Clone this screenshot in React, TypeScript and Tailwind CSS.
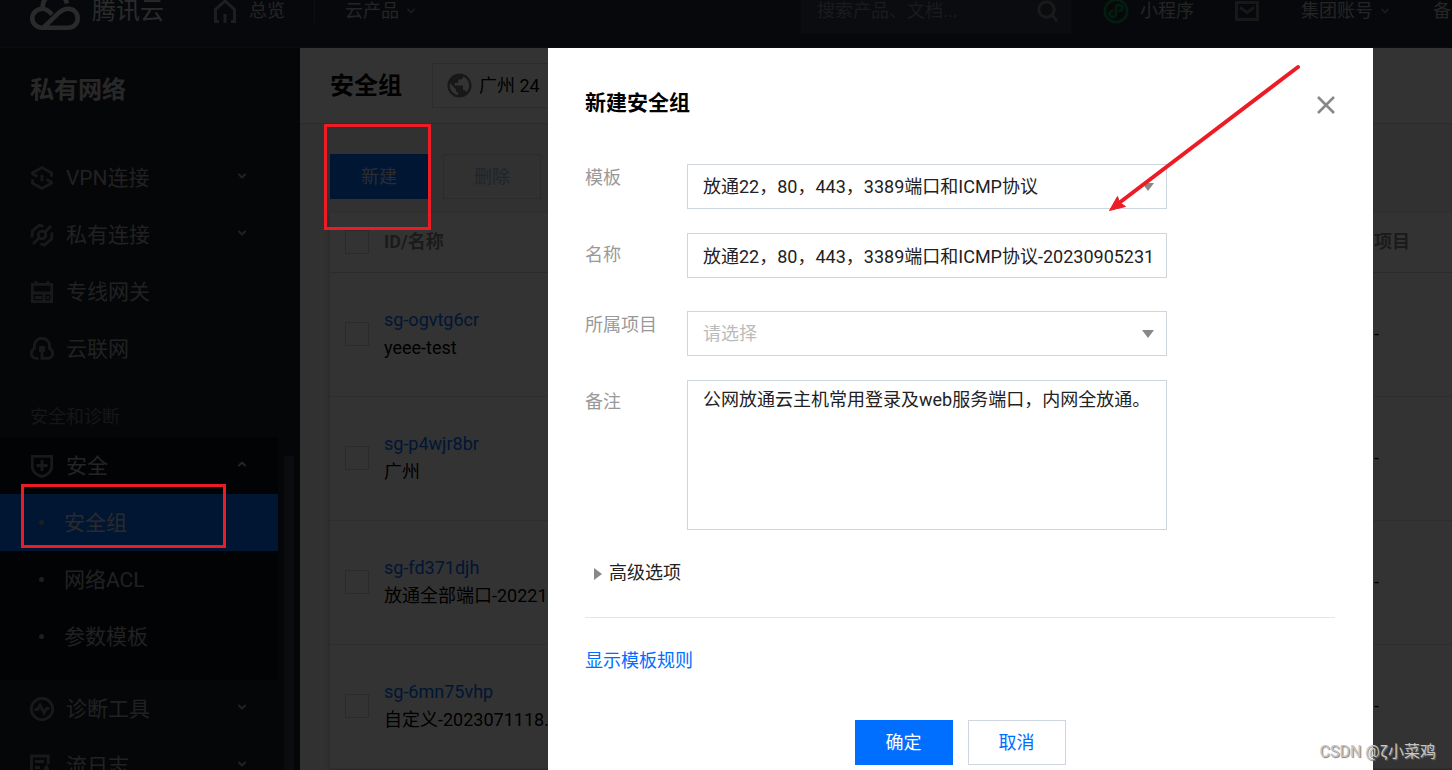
import React, { useState } from 'react';
import { ChevronDown, ChevronUp } from 'lucide-react';
import { MdPublic } from 'react-icons/md';

interface NavItem {
    label: string;
    icon: React.ReactNode;
    expandable?: boolean;
}

interface SecurityGroup {
    id: string;
    name: string;
    project: string;
}

const TEMPLATE = '放通22，80，443，3389端口和ICMP协议';

const groups: SecurityGroup[] = [
    { id: 'sg-ogvtg6cr', name: 'yeee-test', project: '-' },
    { id: 'sg-p4wjr8br', name: '广州', project: '-' },
    { id: 'sg-fd371djh', name: '放通全部端口-20221...', project: '-' },
    { id: 'sg-6mn75vhp', name: '自定义-2023071118...', project: '-' },
];

const Icon = ({ children }: { children: React.ReactNode }) => (
    <svg viewBox="0 0 24 24" fill="none" stroke="currentColor" strokeWidth="2.8" className="size-6 shrink-0 text-[#787d84]">
        {children}
    </svg>
);

const networkItems: NavItem[] = [
    {
        label: 'VPN连接',
        expandable: true,
        icon: (
            <Icon>
                <path d="M7.5 10.5 2.500 8V6.800L12 1.600l9.500 5.200v4M16.500 13.500l5 2.500v1.200L12 22.400l-9.500-5.200v-4M12 9v6" />
            </Icon>
        ),
    },
    {
        label: '私有连接',
        expandable: true,
        icon: (
            <Icon>
                <circle cx="12" cy="12" r="3.8" />
                <path d="M14.800 9.200 21 3M9.200 14.800 3 21M2 14.500 2.500 8l7-6 4 1.500M22 9.500l-.5 6.500-7 6-4-1" />
            </Icon>
        ),
    },
    {
        label: '专线网关',
        icon: (
            <Icon>
                <path d="M2.300 4.300h19.400v17.400H2.300zM2.300 13h19.400M6 1v3M18 1v3M14 13v8M5 17.500h7M16.500 17.500h2.500" />
            </Icon>
        ),
    },
    {
        label: '云联网',
        icon: (
            <Icon>
                <path d="M8.500 21.300C4 22 1.300 19.500 1.300 16.500c0-2.500 1.500-4.300 3.200-5C3.500 5.500 7 1.300 12 1.300s8.500 4.200 7.500 10.200c1.700.7 3.200 2.500 3.200 5 0 3-2.700 4.800-5.700 4.800h-5V15" />
                <path d="M9.500 9.500h5v5h-5z" fill="currentColor" strokeWidth="1" />
            </Icon>
        ),
    },
];

const toolItems: NavItem[] = [
    {
        label: '诊断工具',
        expandable: true,
        icon: (
            <Icon>
                <circle cx="12" cy="12" r="10.700" />
                <path d="M4.500 12.500h3L10 8l4 8 2.500-4.500h3" />
            </Icon>
        ),
    },
    {
        label: '流日志',
        expandable: true,
        icon: (
            <Icon>
                <path d="M18.200 10V2H1.500v20.500H11M5 7.500h9M5 13.500h5M13 20l3.500-7 3 7 3-4" />
            </Icon>
        ),
    },
];

const securityItems = ['安全组', '网络ACL', '参数模板'];

export default function App() {
    const [active, setActive] = useState('安全组');

    return (
        <div className="relative flex h-screen flex-col overflow-hidden bg-[#f2f2f2] text-lg leading-7 text-black [font-family:Roboto,'Noto_Sans_CJK_SC',sans-serif]">
            <TopBar />
            <div className="flex min-h-0 flex-1">
                <aside className="flex w-[300px] shrink-0 overflow-hidden bg-[#191e28]">
                    <nav className="w-[278px] shrink-0 text-[21px]">
                        <h2 className="flex h-[101px] items-start pt-7 pl-[30px] text-2xl leading-7 font-bold text-[#c8c8c8]">私有网络</h2>
                        {networkItems.map((item) => (
                            <NavRow key={item.label} item={item} />
                        ))}
                        <p className="flex h-[60px] items-center pt-5 pl-[30px] text-lg text-[#6a6f76]">安全和诊断</p>
                        <div className="bg-[#0c0f14] pb-[15px]">
                            <a href="#security" className="flex h-[57px] items-center px-[30px] text-[#b4b4b4]">
                                <Icon>
                                    <path d="M2.300 2.300h19.400v10.200c0 5-4.500 8.700-9.700 10.200-5.200-1.500-9.700-5.200-9.700-10.200zM12 6v11M6.500 11.500h11" />
                                </Icon>
                                <span className="ml-3 flex-1">安全</span>
                                <ChevronUp size={12} strokeWidth={4} className="mb-1" />
                            </a>
                            {securityItems.map((label) => (
                                <a
                                    key={label}
                                    href="#security"
                                    onClick={() => setActive(label)}
                                    className={
                                        active === label
                                            ? 'flex h-[57px] items-center bg-[#006eff] pl-[39px] text-[#d2d2d2]'
                                            : 'flex h-[57px] items-center pl-[39px] text-[#a5a5a5]'
                                    }
                                >
                                    <span className="size-[5px] rounded-full bg-[#969696]" />
                                    <span className="ml-5">{label}</span>
                                </a>
                            ))}
                        </div>
                        {toolItems.map((item) => (
                            <NavRow key={item.label} item={item} />
                        ))}
                    </nav>
                    <div className="mt-[408px] ml-1.5 w-2.5 bg-[#323c50]" />
                </aside>
                <SecurityGroupPage />
            </div>

            <div className="absolute inset-0 flex bg-black/80 pt-12 pr-[79px] pl-[548px]">
                <CreateDialog />
            </div>

            <Annotations />
            <p className="absolute right-4 bottom-1 text-base leading-7 text-[#c4c4c4] [text-shadow:1px_1px_1px_#777]">CSDN @ζ小菜鸡</p>
        </div>
    );
}

const NavRow = ({ item }: { item: NavItem }) => (
    <a href="#nav" className="flex h-[57px] items-center px-[30px] text-[#a5a5a5]">
        {item.icon}
        <span className="ml-3 flex-1">{item.label}</span>
        {item.expandable && <ChevronDown size={12} strokeWidth={4} className="mb-1" />}
    </a>
);

const TopBar = () => (
    <header className="h-12 shrink-0 overflow-hidden border-b border-[#353a48] bg-[#262c3a] text-[#b4b4b4]">
        <div className="-mt-[27px] flex h-[76px] items-center">
            <a href="#home" className="flex shrink-0 items-center pl-[30px] text-[#d2d2d2]">
                <svg viewBox="0 0 50 38" fill="none" stroke="currentColor" strokeWidth="4.500" className="h-[38px] w-[50px]">
                    <path d="M12.500 15C13 7 18.500 2.200 25 2.200c6 0 10.500 3.300 12 9.300" />
                    <path d="M22 22.500C19 19 16 16.700 12.500 16.700 7 16.700 2.300 21 2.300 26.200s4.200 9.500 9.700 9.500h26c5.500 0 9.700-4 9.700-9.500s-4.200-9.500-9.700-9.500c-4 0-6.500 1.800-9.500 4.500L13.500 35.500" />
                </svg>
                <span className="ml-3 text-2xl">腾讯云</span>
            </a>
            <a href="#overview" className="ml-[49px] flex shrink-0 items-center">
                <svg viewBox="0 0 24 24" fill="none" stroke="currentColor" strokeWidth="3" className="size-6 text-[#969696]">
                    <path d="M6 22.500H2.500V10.500L12 2l9.500 8.500v12H18M12 15v9" />
                </svg>
                <span className="ml-3">总览</span>
            </a>
            <span className="ml-[29px] h-6 w-px shrink-0 bg-[#464b58]" />
            <button className="ml-[30px] flex shrink-0 items-center">
                云产品
                <ChevronDown size={12} strokeWidth={4} className="ml-1.5 text-[#787878]" />
            </button>
            <div className="ml-auto flex w-[651px] shrink-0 items-center">
                <label className="flex h-[46px] w-[270px] shrink-0 items-center bg-[#323c50] pr-3 pl-4">
                    <input
                        type="text"
                        aria-label="搜索"
                        placeholder="搜索产品、文档..."
                        className="min-w-0 flex-1 bg-transparent outline-none placeholder:text-[#858585]"
                    />
                    <svg viewBox="0 0 22 22" fill="none" stroke="currentColor" strokeWidth="3" className="size-[22px] text-[#828282]">
                        <circle cx="9.500" cy="9.500" r="7.700" />
                        <path d="m15 15 5 6" />
                    </svg>
                </label>
                <a href="#mini" className="ml-8 flex shrink-0 items-center">
                    <svg viewBox="0 0 26 26" fill="none" stroke="currentColor" strokeWidth="2.500" className="size-[26px] text-[#0d9645]">
                        <circle cx="13" cy="13" r="11.200" />
                        <path d="M10.500 13c-2.500-.3-4 1.200-4 2.800S7.800 19 9.700 19s3.300-1.400 3.300-3.200v-6C13 8 14.500 7 16.300 7s3.200 1.200 3.200 2.800-1.500 3.500-4 3.200" />
                    </svg>
                    <span className="ml-[11px]">小程序</span>
                </a>
                <button aria-label="站内信" className="ml-[41px] shrink-0 text-[#787878]">
                    <svg viewBox="0 0 24 20" fill="none" stroke="currentColor" strokeWidth="3" className="h-5 w-6">
                        <path d="M1.500 1.500h21v17h-21zM5 6.500l7 5 7-5" />
                    </svg>
                </button>
                <button className="ml-[42px] flex shrink-0 items-center">
                    集团账号
                    <ChevronDown size={12} strokeWidth={4} className="ml-1.5 text-[#787878]" />
                </button>
                <a href="#filing" className="ml-[42px] shrink-0">备案</a>
            </div>
        </div>
    </header>
);

const SecurityGroupPage = () => (
    <main className="flex min-w-0 flex-1 flex-col">
        <div className="flex h-[76px] shrink-0 items-center border-b border-[#dcdcdc] bg-white pl-[30px]">
            <h1 className="text-2xl leading-7 font-bold">安全组</h1>
            <button className="ml-[30px] flex h-[45px] w-[170px] items-center border border-[#dcdcdc] pl-3">
                <MdPublic size={29} className="text-[#787878]" />
                <span className="ml-[5px]">广州 24</span>
            </button>
        </div>
        <div className="flex min-h-0 flex-1 flex-col pt-[30px] pl-[30px]">
            <div className="flex gap-[15px]">
                <button className="h-[45px] w-[98px] bg-[#006eff] text-[#dcdcdc]">新建</button>
                <button disabled className="h-[45px] w-[98px] border border-[#d7d7d7] text-[#a0b4dc]">删除</button>
            </div>
            <table className="mt-3.5 w-full table-fixed bg-white text-left shadow-[0_3px_6px_rgba(0,0,0,0.2)]">
                <thead>
                    <tr className="h-[59px] border-b border-[#d7d7d7] text-[#888888]">
                        <th className="w-[54px] pl-[15px]"><Check label="全选" /></th>
                        <th className="font-bold">ID/名称</th>
                        <th className="w-[78px] font-bold">项目</th>
                    </tr>
                </thead>
                <tbody>
                    {groups.map((group) => (
                        <tr key={group.id} className="h-[124px] border-b border-[#e6e6e6]">
                            <td className="pl-[15px]"><Check label={group.id} /></td>
                            <td>
                                <a href="#group" className="block text-[#006eff]">{group.id}</a>
                                <span className="block">{group.name}</span>
                            </td>
                            <td>{group.project}</td>
                        </tr>
                    ))}
                </tbody>
            </table>
        </div>
    </main>
);

const Check = ({ label }: { label: string }) => (
    <input type="checkbox" aria-label={label} className="block size-6 appearance-none border border-[#d2d2d2]" />
);

const CreateDialog = () => {
    const [name, setName] = useState(`${TEMPLATE}-20230905231`);
    const [remark, setRemark] = useState('公网放通云主机常用登录及web服务端口，内网全放通。');

    return (
        <form role="dialog" aria-label="新建安全组" className="min-w-0 flex-1 bg-white pt-10 pr-[38px] pl-[37px]">
            <div className="flex items-center justify-between">
                <h2 className="text-[21px] leading-[30px] font-bold">新建安全组</h2>
                <button type="button" aria-label="关闭" className="pt-1 text-[#888888]">
                    <svg viewBox="0 0 18 18" fill="none" stroke="currentColor" strokeWidth="2.600" className="size-[18px]">
                        <path d="m1 1 16 16M17 1 1 17" />
                    </svg>
                </button>
            </div>

            <div className="mt-[46px] flex w-[582px] flex-col gap-6">
                <div className="flex">
                    <label htmlFor="template" className="w-[102px] shrink-0 text-[#999999]">模板</label>
                    <Select id="template" className="text-[#222222]">
                        <option>{TEMPLATE}</option>
                    </Select>
                </div>
                <div className="flex pb-[9px]">
                    <label htmlFor="name" className="w-[102px] shrink-0 pt-2 text-[#999999]">名称</label>
                    <input
                        id="name"
                        type="text"
                        value={name}
                        onChange={(e) => setName(e.target.value)}
                        className="h-[45px] min-w-0 flex-1 border border-[#cfd5de] pr-3 pb-0.5 pl-[15px] text-[#222222] outline-none"
                    />
                </div>
                <div className="flex">
                    <label htmlFor="project" className="w-[102px] shrink-0 text-[#999999]">所属项目</label>
                    <Select id="project" className="text-[#bbbbbb]">
                        <option>请选择</option>
                    </Select>
                </div>
                <div className="flex">
                    <label htmlFor="remark" className="w-[102px] shrink-0 pt-2 text-[#999999]">备注</label>
                    <textarea
                        id="remark"
                        value={remark}
                        onChange={(e) => setRemark(e.target.value)}
                        className="block h-[150px] min-w-0 flex-1 resize-none border border-[#cfd5de] px-[15px] py-[5px] text-[#222222] outline-none"
                    />
                </div>
            </div>

            <button type="button" className="mt-[29px] flex items-center pl-[9px] text-[#222222]">
                <svg viewBox="0 0 8 12" className="mt-0.5 h-3 w-2 text-[#888888]">
                    <path d="M0 0l8 6-8 6z" fill="currentColor" />
                </svg>
                <span className="ml-[7px]">高级选项</span>
            </button>
            <hr className="mt-[30px] border-[#e5e5e5]" />
            <a href="#rules" className="mt-[29px] block w-fit text-[#006eff]">显示模板规则</a>

            <div className="mt-[45px] flex justify-center gap-[15px]">
                <button type="button" className="h-[45px] w-[98px] bg-[#006eff] text-white">确定</button>
                <button type="button" className="h-[45px] w-[98px] border border-[#cfd5de] text-[#006eff]">取消</button>
            </div>
        </form>
    );
};

interface SelectProps {
    id: string;
    className: string;
    children: React.ReactNode;
}

const Select = ({ id, className, children }: SelectProps) => (
    <div className="relative min-w-0 flex-1">
        <select id={id} className={`block h-[45px] w-full appearance-none border border-[#cfd5de] px-[15px] outline-none ${className}`}>
            {children}
        </select>
        <svg viewBox="0 0 12 8" className="pointer-events-none absolute top-[19px] right-[13px] h-2 w-3 text-[#888888]">
            <path d="M0 0h12L6 8z" fill="currentColor" />
        </svg>
    </div>
);

// red marks drawn over the page
const Annotations = () => (
    <svg className="pointer-events-none absolute inset-0 size-full" fill="none" stroke="#ed1c24" strokeWidth="3">
        <rect x="325.500" y="125.500" width="104" height="103" />
        <rect x="22.500" y="485.500" width="202" height="61" />
        <path d="M1298 67 1119 203" strokeWidth="4" strokeLinecap="round" />
        <path d="M1109.500 210.500l8-14 2 6 6 4z" fill="#ed1c24" strokeWidth="1" />
    </svg>
);
